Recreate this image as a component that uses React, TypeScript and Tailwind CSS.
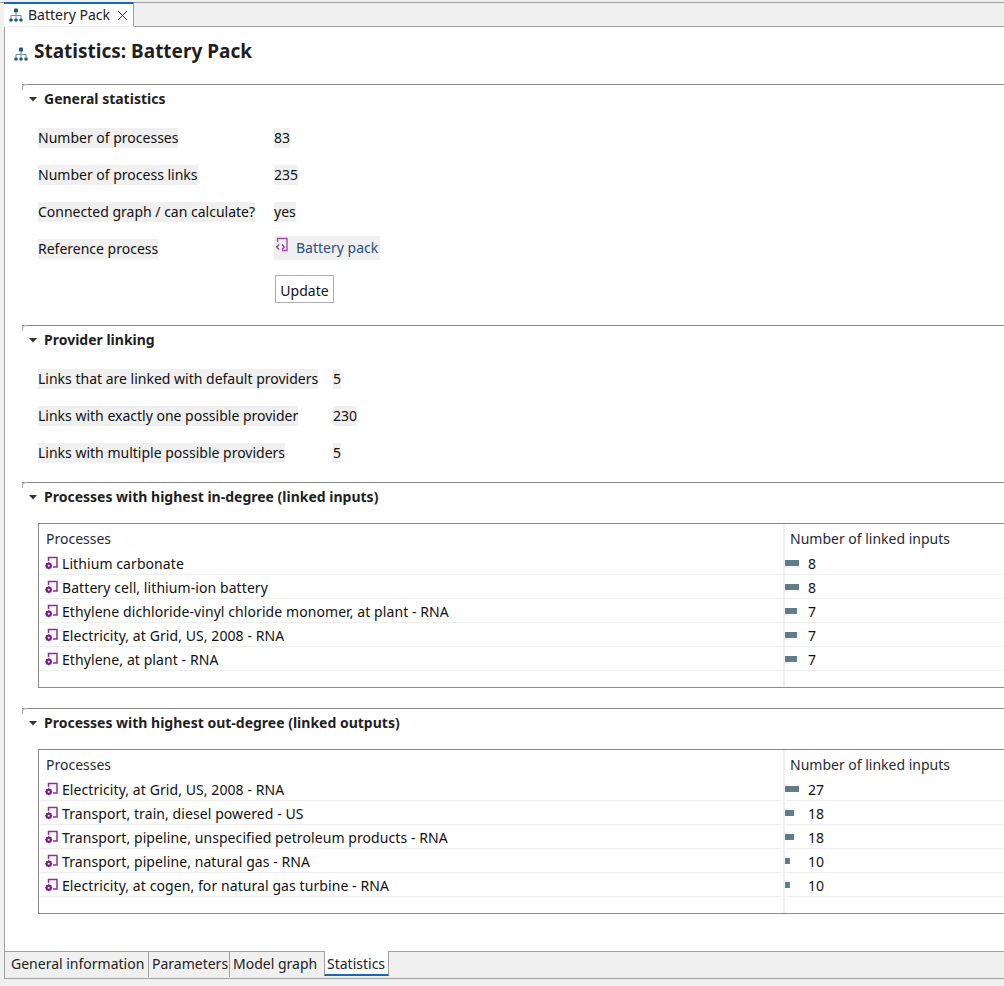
const FONT = "font-['Noto_Sans',sans-serif]";

const inDegree = [
  { name: "Lithium carbonate", value: 8, bar: 14 },
  { name: "Battery cell, lithium-ion battery", value: 8, bar: 14 },
  { name: "Ethylene dichloride-vinyl chloride monomer, at plant - RNA", value: 7, bar: 12 },
  { name: "Electricity, at Grid, US, 2008 - RNA", value: 7, bar: 12 },
  { name: "Ethylene, at plant - RNA", value: 7, bar: 12 },
];

const outDegree = [
  { name: "Electricity, at Grid, US, 2008 - RNA", value: 27, bar: 14 },
  { name: "Transport, train, diesel powered - US", value: 18, bar: 9 },
  { name: "Transport, pipeline, unspecified petroleum products - RNA", value: 18, bar: 9 },
  { name: "Transport, pipeline, natural gas - RNA", value: 10, bar: 5 },
  { name: "Electricity, at cogen, for natural gas turbine - RNA", value: 10, bar: 5 },
];

function SystemIcon({ className }: { className?: string }) {
  return (
    <svg width="16" height="16" viewBox="0 0 16 16" className={`shrink-0 ${className ?? ""}`}>
      <path d="M8 5v6M3 11V8.5h10V11" fill="none" stroke="#6f8fa6" strokeWidth="1" />
      <rect x="6" y="1.5" width="4" height="4" rx="1" fill="#1f5a82" />
      <circle cx="3" cy="13" r="1.8" fill="#1f5a82" />
      <circle cx="8" cy="13" r="1.8" fill="#1f5a82" />
      <circle cx="13" cy="13" r="1.8" fill="#1f5a82" />
    </svg>
  );
}

function ProcessIcon() {
  return (
    <svg width="16" height="16" viewBox="0 0 16 16" className="shrink-0 mt-[5px]">
      <path d="M4.5 5V1.5h8.5v9.5H9" fill="none" stroke="#8a2f96" strokeWidth="1.5" />
      <circle cx="4.7" cy="9.7" r="2" fill="none" stroke="#7a1f88" strokeWidth="2" />
      <path d="M4.7 6.2v1.4M4.7 11.8v1.4M1.2 9.7h1.4M6.8 9.7h1.4M2.2 7.2l1 1M6.2 11.2l1 1M2.2 12.2l1-1M6.2 8.2l1-1" stroke="#7a1f88" strokeWidth="1.5" />
    </svg>
  );
}

function RefProcessIcon() {
  return (
    <svg width="16" height="16" viewBox="0 0 16 16" className="shrink-0 -mt-[5px]">
      <path d="M3.5 5V1.5H13v12H8" fill="none" stroke="#a24bb0" strokeWidth="1.4" />
      <path d="M5 7.5 2.7 10 5 12.5M8 7.5l2.3 2.5L8 12.5" fill="none" stroke="#8a2f96" strokeWidth="1.2" />
    </svg>
  );
}

function Section({ title, children, className }: { title: string; children: React.ReactNode; className: string }) {
  return (
    <section className={`relative border-t border-[#8a8a8a] ${className}`}>
      <span className="absolute -top-px left-0 w-[5px] h-[6px] bg-white border-l border-t border-[#a8a8a8] rounded-tl-[4px]" />
      <div className="flex items-center h-[28px] pl-[7px] gap-[7px]">
        <svg width="8" height="5" viewBox="0 0 8 5" className="shrink-0">
          <path d="M0 0h8L4 4.5z" fill="#333" />
        </svg>
        <h2 className="font-bold text-[14px] leading-[20px] text-[#1f1f1f]">{title}</h2>
      </div>
      {children}
    </section>
  );
}

function Row({ label, value, labelWidth }: { label: string; value: React.ReactNode; labelWidth: string }) {
  return (
    <div className={`grid ${labelWidth} h-[37px] items-center`}>
      <span className="justify-self-start bg-[#f0f0f0] h-[20px] leading-[20px]">{label}</span>
      <span className="justify-self-start bg-[#f0f0f0] h-[20px] leading-[20px]">{value}</span>
    </div>
  );
}

function StatsTable({ rows }: { rows: { name: string; value: number; bar: number }[] }) {
  return (
    <div className="ml-[16px] mt-[12px] h-[165px] border border-[#8a8a8a] border-r-0 w-[1100px]">
      <div className="grid grid-cols-[746px_1fr] h-[27px]">
        <div className="pl-[7px] leading-[30px] border-r-2 border-[#eef0f5] text-[#1f2a36]">Processes</div>
        <div className="pl-[5px] leading-[30px] text-[#1f2a36]">Number of linked inputs</div>
      </div>
      {rows.map((r) => (
        <div key={r.name} className="grid grid-cols-[746px_1fr] h-[24px] border-b border-[#eeeeee]">
          <div className="flex items-start pl-[5px] gap-[2px] border-r-2 border-[#eef0f5]">
            <ProcessIcon />
            <span className="leading-[25px] tracking-[0.08px]">{r.name}</span>
          </div>
          <div className="flex items-start">
            <div className="w-[23px] shrink-0 pt-[9px]">
              <div className="h-[6px] bg-[#5f7d8c]" style={{ width: r.bar }} />
            </div>
            <span className="leading-[25px]">{r.value}</span>
          </div>
        </div>
      ))}
      <div className="grid grid-cols-[746px_1fr] h-[16px]">
        <div className="border-r-2 border-[#eef0f5]" />
        <div />
      </div>
    </div>
  );
}

export default function App() {
  return (
    <div className={`${FONT} w-[1004px] h-[986px] overflow-hidden bg-[#f0f0f0] text-[14px] text-[#111] flex flex-col pt-[2px]`}>
      <div className="flex h-[25px] shrink-0 pl-[4px] border-t border-[#a0a0a0]">
        <div className="flex items-center w-[130px] h-[24px] bg-white border-t-2 border-t-[#0f6cbd] border-r border-[#a0a0a0] pl-[4px] gap-[4px] -mt-px">
          <SystemIcon />
          <span className="leading-[20px] text-[#222]">Battery Pack</span>
          <svg width="11" height="11" viewBox="0 0 11 11" className="ml-[3px] shrink-0">
            <path d="M1 1l9 9M10 1l-9 9" stroke="#333" strokeWidth="1" />
          </svg>
        </div>
        <div className="flex-1 border-b border-[#a0a0a0]" />
      </div>

      <div className="flex-1 ml-[4px] border-l border-[#a0a0a0] border-b flex flex-col min-h-0">
        <main className="flex-1 bg-white min-h-0">
          <div className="flex items-center h-[50px] pl-[8px] gap-[5px]">
            <SystemIcon className="mt-[4px]" />
            <h1 className="font-bold text-[19px] leading-[26px] text-[#1f1f1f] -mt-[3px]">Statistics: Battery Pack</h1>
          </div>

          <div className="ml-[17px] mt-[7px]">
            <Section title="General statistics" className="h-[241px]">
              <div className="pl-[16px] pt-[6px]">
                <Row labelWidth="grid-cols-[236px_1fr]" label="Number of processes" value="83" />
                <Row labelWidth="grid-cols-[236px_1fr]" label="Number of process links" value="235" />
                <Row labelWidth="grid-cols-[236px_1fr]" label="Connected graph / can calculate?" value="yes" />
                <div className="grid grid-cols-[236px_1fr] h-[37px] items-center">
                  <span className="justify-self-start bg-[#f0f0f0] h-[20px] leading-[20px]">Reference process</span>
                  <a className="justify-self-start flex items-center bg-[#f0f0f0] h-[24px] pr-[2px] gap-[6px] text-[#27507d] -mt-[2px]">
                    <RefProcessIcon />
                    Battery pack
                  </a>
                </div>
                <div className="pl-[237px] pt-[8px]">
                  <button className="w-[59px] h-[28px] pt-[2px] bg-white border border-[#adadad] text-[#111]">Update</button>
                </div>
              </div>
            </Section>

            <Section title="Provider linking" className="h-[157px]">
              <div className="pl-[16px] pt-[6px]">
                <Row labelWidth="grid-cols-[295px_1fr]" label="Links that are linked with default providers" value="5" />
                <Row labelWidth="grid-cols-[295px_1fr]" label="Links with exactly one possible provider" value="230" />
                <Row labelWidth="grid-cols-[295px_1fr]" label="Links with multiple possible providers" value="5" />
              </div>
            </Section>

            <Section title="Processes with highest in-degree (linked inputs)" className="h-[226px]">
              <StatsTable rows={inDegree} />
            </Section>

            <Section title="Processes with highest out-degree (linked outputs)" className="h-[200px]">
              <StatsTable rows={outDegree} />
            </Section>
          </div>
        </main>

        <nav className="flex h-[27px] shrink-0 border-t border-[#a0a0a0] bg-[#f0f0f0] pl-[2px]">
          <div className="w-[142px] h-[25px] pl-[4px] leading-[24px] border-r border-[#a0a0a0] text-[#222]">General information</div>
          <div className="w-[81px] h-[25px] pl-[3px] leading-[24px] border-r border-[#a0a0a0] text-[#222]">Parameters</div>
          <div className="w-[94px] h-[25px] pl-[3px] leading-[24px] text-[#222]">Model graph</div>
          <div className="w-[65px] -mt-px h-[25px] pl-[2px] leading-[25px] bg-white border-x border-[#a0a0a0] border-b-2 border-b-[#0f6cbd] text-[#222]">Statistics</div>
        </nav>
      </div>
      <div className="h-[7px] shrink-0" />
    </div>
  );
}
